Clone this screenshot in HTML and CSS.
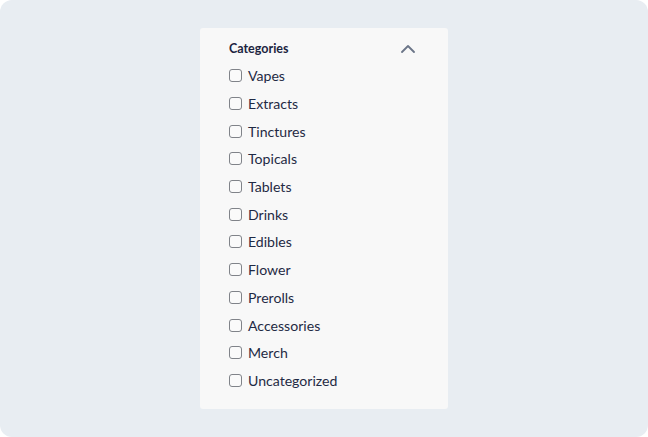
FILE: index.html
```html
<!DOCTYPE html>
<html>
<head>
<meta charset="utf-8">
<link rel="stylesheet" href="styles.css">
</head>
<body>
<div class="page">
  <div class="panel">
    <div class="header">
      <span class="title">Categories</span>
      <svg class="chev" width="14" height="9" viewBox="0 0 14 9"><path d="M1 8 L7 2 L13 8" fill="none" stroke="#6b7588" stroke-width="1.8" stroke-linecap="round" stroke-linejoin="round"/></svg>
    </div>
    <ul class="list">
      <li class="item"><span class="box"></span><span class="label">Vapes</span></li>
      <li class="item"><span class="box"></span><span class="label">Extracts</span></li>
      <li class="item"><span class="box"></span><span class="label">Tinctures</span></li>
      <li class="item"><span class="box"></span><span class="label">Topicals</span></li>
      <li class="item"><span class="box"></span><span class="label">Tablets</span></li>
      <li class="item"><span class="box"></span><span class="label">Drinks</span></li>
      <li class="item"><span class="box"></span><span class="label">Edibles</span></li>
      <li class="item"><span class="box"></span><span class="label">Flower</span></li>
      <li class="item"><span class="box"></span><span class="label">Prerolls</span></li>
      <li class="item"><span class="box"></span><span class="label">Accessories</span></li>
      <li class="item"><span class="box"></span><span class="label">Merch</span></li>
      <li class="item"><span class="box"></span><span class="label">Uncategorized</span></li>
    </ul>
  </div>
</div>
</body>
</html>
```
FILE: styles.css
```css
html, body {
  margin: 0;
  padding: 0;
  background: #ffffff;
}
.page {
  width: 648px;
  height: 437px;
  background: #e8edf2;
  border-radius: 12px;
  display: flex;
  justify-content: center;
  align-items: flex-start;
  padding-top: 28px;
  box-sizing: border-box;
  font-family: "Lato", "Noto Sans", sans-serif;
}
.panel {
  width: 248px;
  height: 381px;
  background: #f8f8f8;
  border-radius: 3px;
  box-sizing: border-box;
  padding: 7px 33px 0 29px;
}
.header {
  height: 27px;
  display: flex;
  align-items: center;
  justify-content: space-between;
}
.title {
  font-size: 12.5px;
  font-weight: 700;
  color: #1b2440;
}
.chev {
  display: block;
  margin-top: -1px;
}
.list {
  list-style: none;
  margin: 0;
  padding: 0;
}
.item {
  height: 27.7px;
  display: flex;
  align-items: center;
}
.box {
  width: 13px;
  height: 13px;
  box-sizing: border-box;
  border: 1.5px solid #808389;
  border-radius: 3px;
  background: #fafafa;
  margin-right: 6px;
  flex: none;
}
.label {
  font-size: 14.1px;
  color: #1f2a44;
}
```
